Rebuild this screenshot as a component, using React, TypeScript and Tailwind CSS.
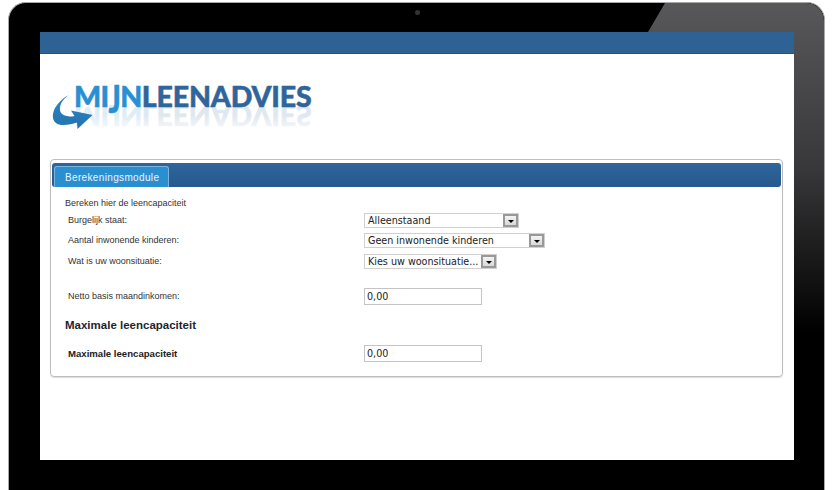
const arial = "font-['Liberation_Sans',Arial,sans-serif]";
const verdana = "font-['DejaVu_Sans',Verdana,sans-serif]";

function Select({ value, width }: { value: string; width: string }) {
  return (
    <div className={`flex h-[15px] items-center justify-between border border-[#d0d0d0] bg-white pl-[3px] ${width}`}>
      <span className={`${verdana} whitespace-nowrap text-[9.6px] leading-none text-[#222]`}>{value}</span>
      <span className="flex h-[13px] w-[15px] shrink-0 items-end justify-center border-2 border-[#999] bg-gradient-to-b from-[#f4f4f4] to-[#d8d8d8] pb-[2px]">
        <span className="h-0 w-0 border-x-[3px] border-t-[3px] border-x-transparent border-t-black" />
      </span>
    </div>
  );
}

function Input({ value }: { value: string }) {
  return (
    <div className={`${verdana} flex h-[17px] w-[118px] items-center border border-[#c4c4c4] bg-white pl-[2px] text-[9.6px] leading-none text-[#222]`}>
      {value}
    </div>
  );
}

function Row({ label, className, children }: { label: string; className?: string; children: React.ReactNode }) {
  return (
    <div className={`flex items-center ${className ?? ''}`}>
      <span className={`w-[299px] pl-[3px] text-[9px] leading-none text-[#333] ${arial}`}>{label}</span>
      {children}
    </div>
  );
}

function Logo() {
  const text = "font-['Lato',Arial,sans-serif] absolute left-[21px] whitespace-nowrap text-[28.5px] font-black [-webkit-text-stroke:0.5px]";
  return (
    <div className="relative ml-[13px] mt-[29px] h-[60px] w-[270px]">
      <svg className="absolute left-[-3px] top-[7px] z-10" width="46" height="42" viewBox="50 90 46 42">
        <defs>
          <linearGradient id="arrow" x1="0" y1="0" x2="0" y2="1">
            <stop offset="0" stopColor="#2a86c6" />
            <stop offset="1" stopColor="#2473ad" />
          </linearGradient>
        </defs>
        <path
          d="M68.5 95 C62 100 59.5 105 60 110 C60.5 114 64 116.5 72.5 116.5 L74.5 116 L71 110.5 L92.5 115 L77.5 129 L77 122.5 C70 125 60 126.5 56 123 C52 120 52 114 55 108 C58 103 63 98 68.5 95 Z"
          fill="url(#arrow)"
        />
      </svg>
      <div className={`${text} top-[-14px] leading-[54px]`}>
        <span className="tracking-[-0.6px] text-[#2a8fd2]">
          MI<span className="inline-block origin-[50%_32%] scale-y-[1.3]">J</span>N
        </span>
        <span className="tracking-[-0.15px] text-[#2f659b]">LEENADVIES</span>
      </div>
      <div className={`${text} top-[17px] -scale-y-100 leading-[32px] opacity-15`}>
        <span className="tracking-[-0.6px] text-[#2a8fd2]">MIJN</span>
        <span className="tracking-[-0.15px] text-[#2f659b]">LEENADVIES</span>
      </div>
      <div className="absolute left-[32px] top-[32px] h-[20px] w-[245px] bg-gradient-to-b from-transparent to-white" />
    </div>
  );
}

function Panel() {
  return (
    <div className="ml-[10px] mr-[11px] mt-[16px] h-[218px] rounded-[4px] border border-[#bdbdbd] px-[1px] pt-[3px] shadow-[0_1px_1px_#ddd]">
      <div className="flex h-[24px] items-end rounded-[3px] bg-gradient-to-b from-[#2f659b] to-[#265a8e] pl-[2px]">
        <div className={`${arial} flex h-[21px] w-[115px] items-center rounded-t-[3px] border border-b-0 border-[#7ab5dd] bg-[#2a8fd0] pl-[10px] text-[10px] tracking-[0.35px] text-[#eaf4fb]`}>
          Berekeningsmodule
        </div>
      </div>
      <div className={`${arial} pl-[13px] pt-[12px] text-[9px] leading-none text-[#333]`}>Bereken hier de leencapaciteit</div>
      <div className="flex flex-col pl-[13px] pt-[5px]">
        <Row label="Burgelijk staat:">
          <Select value="Alleenstaand" width="w-[155px]" />
        </Row>
        <Row label="Aantal inwonende kinderen:" className="mt-[5px]">
          <Select value="Geen inwonende kinderen" width="w-[181px]" />
        </Row>
        <Row label="Wat is uw woonsituatie:" className="mt-[6px]">
          <Select value="Kies uw woonsituatie..." width="w-[133px]" />
        </Row>
        <Row label="Netto basis maandinkomen:" className="mt-[19px]">
          <Input value="0,00" />
        </Row>
      </div>
      <div className={`${arial} pl-[13px] pt-[14px] text-[11.5px] font-bold leading-[12px] text-[#1f1f2e]`}>Maximale leencapaciteit</div>
      <div className="pl-[13px] pt-[14px]">
        <div className="flex items-center">
          <span className={`${arial} w-[299px] pl-[3px] text-[9.6px] font-bold leading-none text-[#222]`}>Maximale leencapaciteit</span>
          <Input value="0,00" />
        </div>
      </div>
    </div>
  );
}

export default function App() {
  return (
    <div className="h-[490px] w-[833px] overflow-hidden bg-white pl-[8px] pt-[2px]">
      <div className="relative h-[488px] w-[817px] rounded-t-[18px] border-x border-t border-[#a8a8a8] bg-black px-[31px] pt-[29px]">
        <svg className="absolute right-0 top-0 rounded-tr-[18px]" width="176" height="330" viewBox="0 0 176 330">
          <defs>
            <linearGradient id="gloss" x1="0" y1="0" x2="0" y2="1">
              <stop offset="0" stopColor="#58585a" />
              <stop offset="0.5" stopColor="#38383a" />
              <stop offset="1" stopColor="#000000" />
            </linearGradient>
          </defs>
          <path d="M17 0 L176 0 L176 330 L145 330 L145 29 L0 29 Z" fill="url(#gloss)" />
        </svg>
        <div className="absolute left-[406px] top-[7px] h-[5px] w-[5px] rounded-full bg-[#333]" />
        <div className="relative flex h-[428px] w-[754px] flex-col bg-white">
          <div className="h-[22px] w-full border-b border-[#24547f] bg-[#2e6294]" />
          <Logo />
          <Panel />
        </div>
      </div>
    </div>
  );
}
